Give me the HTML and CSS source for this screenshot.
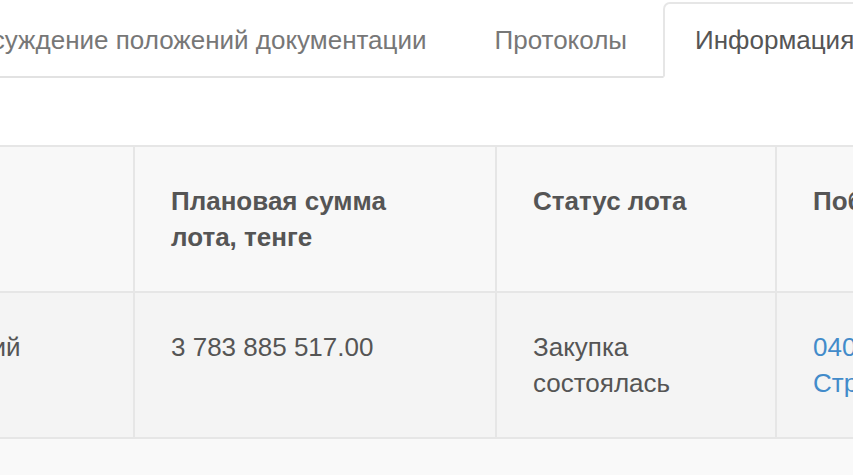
FILE: index.html
```html
<!doctype html>
<html lang="ru">
<head>
    <meta charset="UTF-8">
    <title>Информация по лотам</title>
    <link rel="stylesheet" href="styles.css">
</head>
<body>
    <ul class="nav-tabs">
        <li class="tab"><a href="#">Обсуждение положений документации</a></li>
        <li class="tab"><a href="#">Протоколы</a></li>
        <li class="tab active"><a href="#">Информация по лотам</a></li>
    </ul>

    <div class="tab-content">
        <table class="lots">
            <colgroup>
                <col class="col-name">
                <col class="col-sum">
                <col class="col-status">
                <col class="col-winner">
            </colgroup>
            <thead>
                <tr>
                    <th>Предмет</th>
                    <th class="sum-head">Плановая сумма лота, тенге</th>
                    <th>Статус лота</th>
                    <th>Победитель</th>
                </tr>
            </thead>
            <tbody>
                <tr>
                    <td>Технический</td>
                    <td>3 783 885 517.00</td>
                    <td>Закупка состоялась</td>
                    <td><a href="#">040240002345<br>Стройинвест</a></td>
                </tr>
            </tbody>
        </table>
        <div class="table-bottom"></div>
    </div>
</body>
</html>
```

FILE: styles.css
```css
html, body {
    overflow: hidden;
}
body {
    margin: 0;
    background: #fff;
    font-family: "Liberation Sans", Arial, sans-serif;
    font-size: 26px;
    line-height: 36px;
    color: #555;
}
a {
    color: #428bca;
    text-decoration: none;
}

/* tabs */
.nav-tabs {
    display: flex;
    list-style: none;
    margin: 2px 0 0 -75px;
    padding: 0;
    border-bottom: 2px solid #e2e2e2;
    white-space: nowrap;
}
.tab {
    margin: 0 4px -2px 0;
}
.tab a {
    display: block;
    padding: 18px 30px;
    color: #777;
    border: 2px solid transparent;
    border-radius: 7px 7px 0 0;
}
.tab.active a {
    color: #555;
    background: #fff;
    border-color: #e6e6e6 #e6e6e6 transparent;
}

/* lots table */
.tab-content {
    margin-top: 67px;
}
.lots {
    table-layout: fixed;
    width: 1346px;
    margin-left: -169px;
    border-collapse: collapse;
    border: 2px solid #e6e6e6;
}
.col-name { width: 302px; }
.col-sum { width: 362px; }
.col-status { width: 280px; }
.col-winner { width: 402px; }
.lots th,
.lots td {
    padding: 36px;
    border: 2px solid #e6e6e6;
    text-align: left;
    vertical-align: top;
}
.lots th {
    font-weight: bold;
    background: #f8f8f8;
}
.lots th.sum-head {
    padding-right: 44px;
}
.lots td {
    background: #f4f4f4;
}
.table-bottom {
    height: 60px;
    background: #f9f9f9;
}
```
